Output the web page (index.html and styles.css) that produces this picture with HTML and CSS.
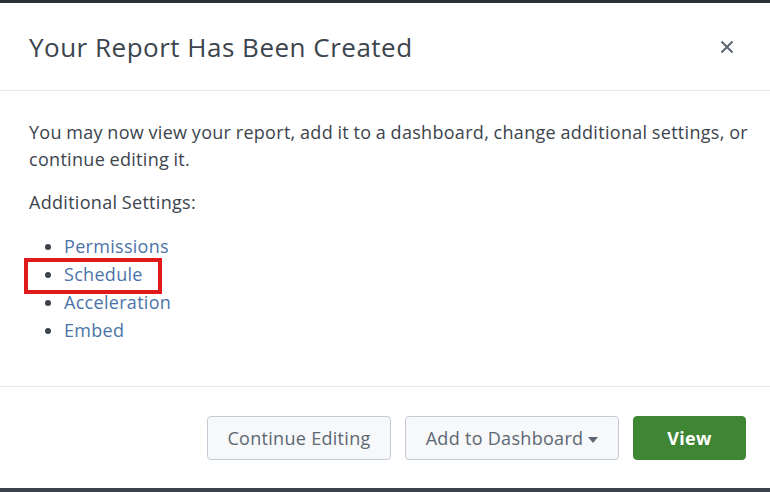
FILE: index.html
```html
<!DOCTYPE html>
<html lang="en">
<head>
  <meta charset="UTF-8" />
  <title>Your Report Has Been Created</title>
  <link rel="stylesheet" href="styles.css">
</head>
<body>
  <div class="modal">
    <div class="modal-header">
      <h2>Your Report Has Been Created</h2>
      <button class="close" title="Close">
        <svg width="14" height="14" viewBox="0 0 14 14"><path d="M1.5 1.5 L12.5 12.5 M12.5 1.5 L1.5 12.5" stroke="#5c6773" stroke-width="2" fill="none"/></svg>
      </button>
    </div>

    <div class="modal-body">
      <p>You may now view your report, add it to a dashboard, change additional settings, or continue editing it.</p>
      <p>Additional Settings:</p>
      <ul class="settings">
        <li><a href="#">Permissions</a></li>
        <li class="marked"><a href="#">Schedule</a></li>
        <li><a href="#">Acceleration</a></li>
        <li><a href="#">Embed</a></li>
      </ul>
    </div>

    <div class="modal-footer">
      <button class="btn">Continue Editing</button>
      <button class="btn">Add to Dashboard <span class="caret"></span></button>
      <button class="btn btn-primary">View</button>
    </div>
  </div>
</body>
</html>
```

FILE: styles.css
```css
* {
  box-sizing: border-box;
}

body {
  margin: 0;
  font-family: 'Open Sans', sans-serif;
  color: #3c444d;
  background: #fff;
}

.modal {
  height: 492px;
  border-top: 3px solid #2c3136;
  border-bottom: 4px solid #3c4249;
  display: flex;
  flex-direction: column;
}

.modal-header {
  height: 88px;
  display: flex;
  align-items: center;
  justify-content: space-between;
  padding: 0 36px 0 29px;
  border-bottom: 1px solid #e1e6eb;
}

.modal-header h2 {
  margin: 0;
  font-size: 26px;
  font-weight: 500;
  letter-spacing: 0.5px;
  color: #3c444d;
}

.close {
  border: none;
  background: none;
  padding: 0;
  cursor: pointer;
  display: flex;
}

.modal-body {
  flex: 1;
  padding: 28px 14px 0 29px;
  font-size: 18px;
  letter-spacing: 0.3px;
  word-spacing: -0.5px;
  line-height: 27px;
  border-bottom: 1px solid #e1e6eb;
}

.modal-body p {
  margin: 0 0 16px;
}

.settings {
  margin: 14px 0 0;
  padding-left: 35px;
  line-height: 28px;
}

.settings li {
  position: relative;
}

.settings li::marker {
  color: #3c444d;
}

.settings a {
  color: #4a74a8;
  text-decoration: none;
}

.settings li.marked::before {
  content: "";
  box-sizing: border-box;
  position: absolute;
  left: -40px;
  top: -2px;
  width: 138px;
  height: 36px;
  border: 4px solid #e0191b;
}

.modal-footer {
  height: 101px;
  display: flex;
  align-items: center;
  justify-content: flex-end;
  gap: 14px;
  padding: 0 24px;
}

.btn {
  height: 44px;
  padding: 0 16px;
  font-family: inherit;
  font-size: 18px;
  letter-spacing: 0.3px;
  color: #5c6773;
  background: #f7f8fa;
  border: 1px solid #c3cbd4;
  border-radius: 4px;
  cursor: pointer;
}

.btn:first-child {
  width: 184px;
}

.btn:nth-child(2) {
  width: 214px;
}

.caret {
  display: inline-block;
  vertical-align: middle;
  border-left: 5px solid transparent;
  border-right: 5px solid transparent;
  border-top: 6px solid #5c6773;
}

.btn-primary {
  width: 113px;
  background: #3e8534;
  border-color: #3e8534;
  color: #fff;
  font-weight: 700;
}
```
